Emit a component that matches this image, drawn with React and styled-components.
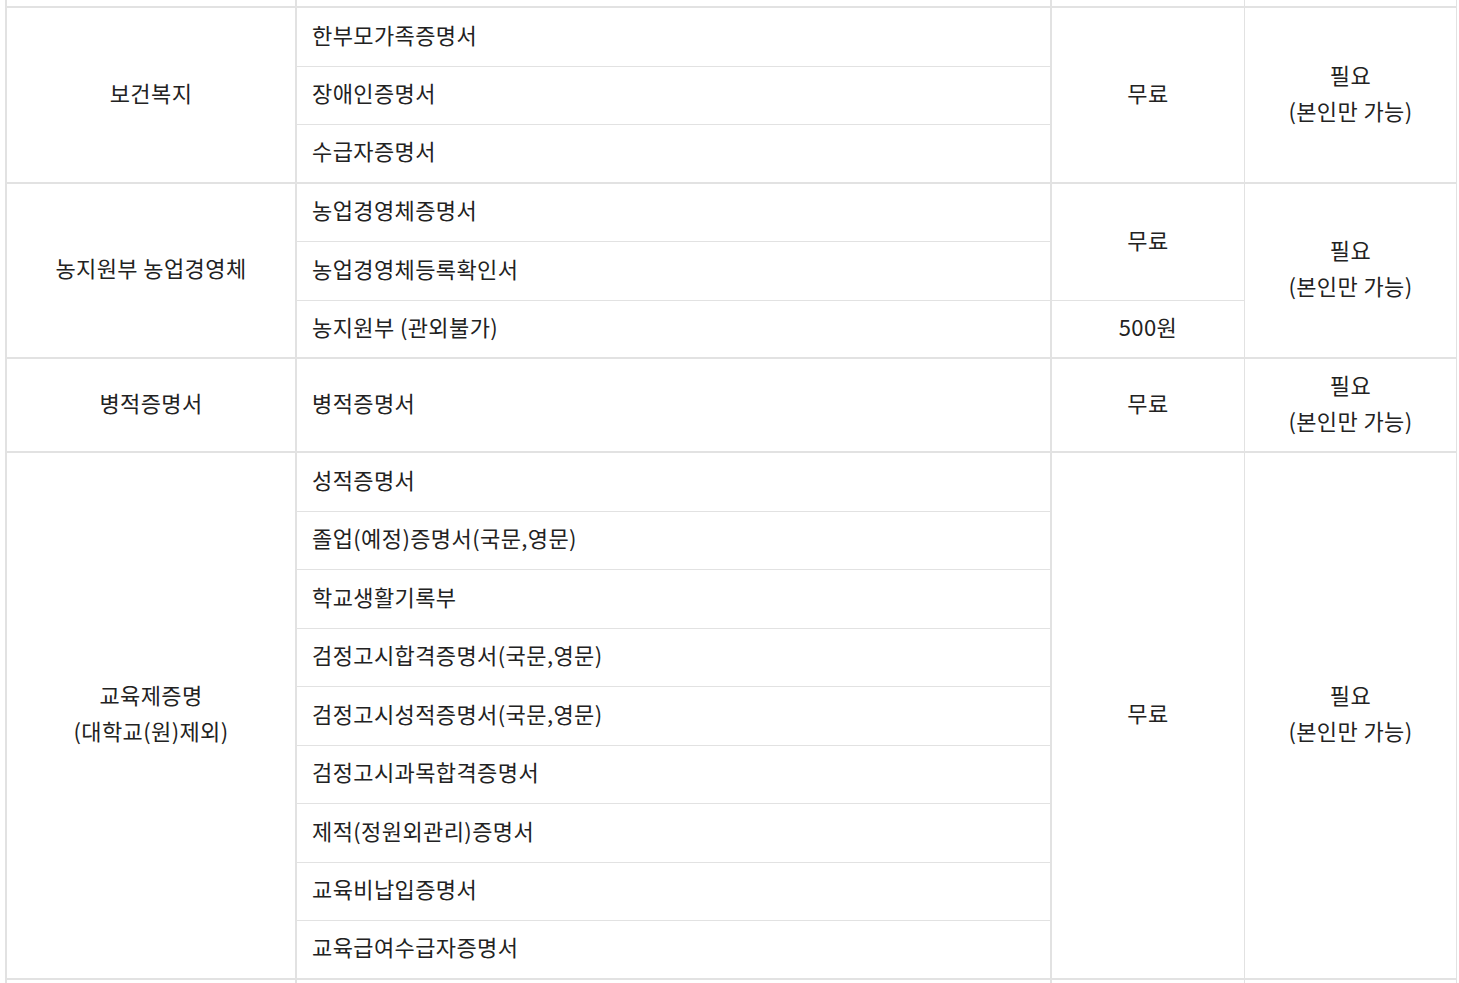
import React from "react";
import styled, { createGlobalStyle } from "styled-components";

const Global = createGlobalStyle`
  html, body {
    margin: 0;
    padding: 0;
    background: #fff;
    overflow: hidden;
  }
  body {
    font-family: "Noto Sans CJK KR", "Noto Sans", sans-serif;
    color: #222;
  }
`;

const LINE = "#e2e2e2";

const Wrap = styled.div`
  padding-left: 5px;
  height: 983px;
  overflow: hidden;
`;

const Table = styled.table`
  width: 1452px;
  table-layout: fixed;
  border-collapse: separate;
  border-spacing: 0;
  border-left: 2px solid ${LINE};
  font-size: 22px;
  line-height: 36px;
  letter-spacing: 0.4px;
`;

const Row = styled.tr`
  height: ${(p) => p.$h || 58.5}px;
`;

const Cell = styled.td`
  box-sizing: border-box;
  padding: 0 0 ${(p) => (p.$pad ? "6px" : "0")};
  padding-left: ${(p) => (p.$left ? "15px" : "0")};
  text-align: ${(p) => (p.$left ? "left" : "center")};
  vertical-align: middle;
  border-right: ${(p) => p.$r || 1}px solid ${LINE};
  border-bottom: ${(p) => (p.$b === 0 ? "none" : `${p.$b || 1}px solid ${LINE}`)};
  white-space: nowrap;
`;

const COLS = [290, 755, 193, 212];
const RIGHT = [2, 2, 1, 1];

const groups = [
  {
    title: ["보건복지"],
    items: ["한부모가족증명서", "장애인증명서", "수급자증명서"],
    fees: [{ text: "무료", span: 3 }],
  },
  {
    title: ["농지원부 농업경영체"],
    items: ["농업경영체증명서", "농업경영체등록확인서", "농지원부 (관외불가)"],
    fees: [
      { text: "무료", span: 2 },
      { text: "500원", span: 1 },
    ],
  },
  {
    title: ["병적증명서"],
    items: ["병적증명서"],
    fees: [{ text: "무료", span: 1 }],
    height: 94,
  },
  {
    title: ["교육제증명", "(대학교(원)제외)"],
    items: [
      "성적증명서",
      "졸업(예정)증명서(국문,영문)",
      "학교생활기록부",
      "검정고시합격증명서(국문,영문)",
      "검정고시성적증명서(국문,영문)",
      "검정고시과목합격증명서",
      "제적(정원외관리)증명서",
      "교육비납입증명서",
      "교육급여수급자증명서",
    ],
    fees: [{ text: "무료", span: 9 }],
  },
];

const Lines = ({ lines }) =>
  lines.map((l, i) => (
    <React.Fragment key={i}>
      {i > 0 && <br />}
      {l}
    </React.Fragment>
  ));

const Group = ({ g }) => {
  const n = g.items.length;
  const feeAt = {};
  let acc = 0;
  g.fees.forEach((f) => {
    feeAt[acc] = f;
    acc += f.span;
  });

  return g.items.map((item, i) => {
    const last = i === n - 1;
    const fee = feeAt[i];
    return (
      <Row key={item + i} $h={g.height}>
        {i === 0 && (
          <Cell rowSpan={n} $pad $r={2} $b={2}>
            <Lines lines={g.title} />
          </Cell>
        )}
        <Cell $left $pad $r={2} $b={last ? 2 : 1}>
          {item}
        </Cell>
        {fee && (
          <Cell rowSpan={fee.span} $pad $r={1} $b={i + fee.span === n ? 2 : 1}>
            {fee.text}
          </Cell>
        )}
        {i === 0 && (
          <Cell rowSpan={n} $pad $r={1} $b={2}>
            <Lines lines={["필요", "(본인만 가능)"]} />
          </Cell>
        )}
      </Row>
    );
  });
};

export default function App() {
  return (
    <Wrap>
      <Global />
      <Table>
        <colgroup>
          {COLS.map((w, i) => (
            <col key={i} style={{ width: w }} />
          ))}
        </colgroup>
        <tbody>
          <Row $h={8}>
            {RIGHT.map((r, i) => (
              <Cell key={i} $r={r} $b={2} />
            ))}
          </Row>
          {groups.map((g, i) => (
            <Group key={i} g={g} />
          ))}
          <Row $h={20}>
            {RIGHT.map((r, i) => (
              <Cell key={i} $r={r} $b={0} />
            ))}
          </Row>
        </tbody>
      </Table>
    </Wrap>
  );
}
